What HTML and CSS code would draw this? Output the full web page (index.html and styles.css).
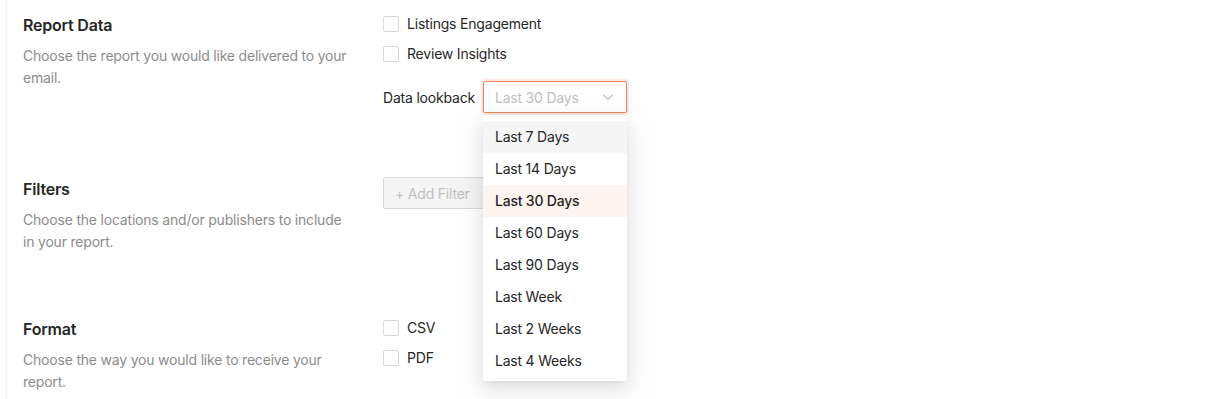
FILE: index.html
```html
<!DOCTYPE html>
<html>
<head>
	<meta charset="utf-8">
	<meta name="viewport" content="width=device-width, initial-scale=1">
	<title>Report Settings</title>

	<link rel="stylesheet" href="styles.css">
</head>
<body>
	<main class="settings">
		<section class="row">
			<div class="info">
				<h2>Report Data</h2>
				<p>Choose the report you would like delivered to your email.</p>
			</div>
			<div class="fields">
				<label class="check"><span class="box"></span>Listings Engagement</label>
				<label class="check"><span class="box"></span>Review Insights</label>
				<div class="lookback">
					<span class="lookback-label">Data lookback</span>
					<div class="select-wrap">
						<div class="select">
							<span class="placeholder">Last 30 Days</span>
							<svg class="chevron" width="12" height="12" viewBox="0 0 12 12">
								<path d="M1.5 4 L6 8.5 L10.5 4" fill="none" stroke="#bfbfbf" stroke-width="1.2"/>
							</svg>
						</div>
						<ul class="menu">
							<li class="hover">Last 7 Days</li>
							<li>Last 14 Days</li>
							<li class="selected">Last 30 Days</li>
							<li>Last 60 Days</li>
							<li>Last 90 Days</li>
							<li>Last Week</li>
							<li>Last 2 Weeks</li>
							<li>Last 4 Weeks</li>
						</ul>
					</div>
				</div>
			</div>
		</section>
		<section class="row">
			<div class="info">
				<h2>Filters</h2>
				<p>Choose the locations and/or publishers to include in your report.</p>
			</div>
			<div class="fields">
				<button class="add-filter" disabled>+ Add Filter</button>
			</div>
		</section>
		<section class="row">
			<div class="info">
				<h2>Format</h2>
				<p>Choose the way you would like to receive your report.</p>
			</div>
			<div class="fields">
				<label class="check"><span class="box"></span>CSV</label>
				<label class="check"><span class="box"></span>PDF</label>
			</div>
		</section>
	</main>
</body>
</html>
```

FILE: styles.css
```css
* {
	margin: 0;
	padding: 0;
	box-sizing: border-box;
}

body {
	font-family: "Inter", "Noto Sans", sans-serif;
	font-size: 14px;
	letter-spacing: -0.2px;
	color: #262626;
	background: #fff;
	overflow: hidden;
}

.settings {
	margin-left: 6px;
	min-height: 399px;
	border-left: 1px solid #f0f0f0;
	padding: 16px 0 0 16px;
	display: flex;
	flex-direction: column;
	gap: 67px;
}

.row {
	display: flex;
}

.info {
	width: 360px;
	flex-shrink: 0;
	padding-right: 30px;
}

.info h2 {
	font-size: 16px;
	font-weight: 600;
	line-height: 19px;
	color: #262626;
}

.info p {
	margin-top: 10px;
	line-height: 22px;
	color: #8c8c8c;
}

.fields {
	display: flex;
	flex-direction: column;
	align-items: flex-start;
}

.check {
	display: flex;
	align-items: center;
	gap: 8px;
	height: 16px;
	line-height: 16px;
	margin-bottom: 14px;
	color: #262626;
}

.check:last-of-type {
	margin-bottom: 0;
}

.box {
	width: 16px;
	height: 16px;
	border: 1px solid #d9d9d9;
	border-radius: 2px;
	background: #fff;
}

.lookback {
	display: flex;
	align-items: center;
	gap: 8px;
	margin-top: 19px;
}

.select-wrap {
	position: relative;
}

.select {
	width: 144px;
	height: 32px;
	border: 1px solid #f47f5d;
	border-radius: 2px;
	box-shadow: 0 0 0 2px rgba(244, 127, 93, 0.18);
	display: flex;
	align-items: center;
	justify-content: space-between;
	padding: 0 12px 0 11px;
}

.placeholder {
	color: #bfbfbf;
}

.menu {
	position: absolute;
	top: 36px;
	left: 0;
	width: 144px;
	list-style: none;
	background: #fff;
	padding: 4px 0;
	border-radius: 2px;
	box-shadow: 0 3px 6px -4px rgba(0, 0, 0, 0.12), 0 6px 16px 0 rgba(0, 0, 0, 0.08), 0 9px 28px 8px rgba(0, 0, 0, 0.05);
	z-index: 2;
}

.menu li {
	height: 32px;
	line-height: 32px;
	padding: 0 12px;
	color: #262626;
}

.menu .hover {
	background: #f5f5f5;
}

.menu .selected {
	background: #fff5f0;
	font-weight: 500;
	color: #1f1f1f;
}

.add-filter {
	margin-top: -3px;
	height: 32px;
	width: 110px;
	padding: 0 11px;
	text-align: left;
	font-family: inherit;
	font-size: 14px;
	letter-spacing: inherit;
	color: #bfbfbf;
	background: #f5f5f5;
	border: 1px solid #d9d9d9;
	border-radius: 2px;
}
```
